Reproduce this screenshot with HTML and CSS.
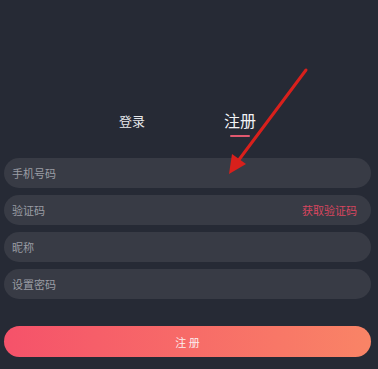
FILE: index.html
```html
<!DOCTYPE html>
<html lang="zh">
<head>
<meta charset="utf-8">
<link rel="stylesheet" href="styles.css">
</head>
<body>
<div class="page">
  <div class="tabs">
    <div class="tab">登录</div>
    <div class="tab active">注册<span class="bar"></span></div>
  </div>
  <div class="form">
    <div class="field"><span class="ph">手机号码</span></div>
    <div class="field"><span class="ph">验证码</span><span class="code">获取验证码</span></div>
    <div class="field"><span class="ph">昵称</span></div>
    <div class="field"><span class="ph">设置密码</span></div>
  </div>
  <div class="btn">注 册</div>
  <svg class="arrow" width="378" height="369" viewBox="0 0 378 369">
    <line x1="306" y1="70" x2="238" y2="161" stroke="#d8201c" stroke-width="3" stroke-linecap="round"/>
    <polygon points="229,174 232,154 246,164" fill="#d8201c"/>
  </svg>
</div>
</body>
</html>
```
FILE: styles.css
```css
html, body {
  margin: 0;
  padding: 0;
  background: #262a35;
}
.page {
  position: relative;
  width: 378px;
  height: 369px;
  overflow: hidden;
  font-family: "Noto Sans CJK SC", "Noto Sans", sans-serif;
  padding: 0 7px 0 4px;
  box-sizing: border-box;
}
.tabs {
  display: flex;
  justify-content: center;
  gap: 79px;
  padding-top: 110px;
  height: 158px;
  box-sizing: border-box;
  align-items: flex-start;
}
.tab {
  color: #e6e7ea;
  font-size: 13px;
  line-height: 22px;
  position: relative;
}
.tab.active {
  font-size: 16px;
  color: #f2f3f5;
  line-height: 20px;
}
.bar {
  position: absolute;
  left: 6px;
  right: 6px;
  top: 25px;
  height: 2px;
  background: #e0586f;
  border-radius: 1px;
}
.form {
  display: flex;
  flex-direction: column;
  gap: 7px;
}
.field {
  height: 30px;
  background: #383b45;
  border-radius: 15px;
  display: flex;
  align-items: center;
  justify-content: space-between;
  padding: 0 14px 0 8px;
}
.ph {
  color: #9b9da4;
  font-size: 11px;
}
.code {
  color: #d9465f;
  font-size: 11px;
}
.btn {
  margin-top: 27px;
  height: 31px;
  border-radius: 16px;
  background: linear-gradient(90deg, #f5526a, #f98466);
  color: #fbeeee;
  font-size: 11px;
  display: flex;
  align-items: center;
  justify-content: center;
}
.arrow {
  position: absolute;
  left: 0;
  top: 0;
  pointer-events: none;
}
```
